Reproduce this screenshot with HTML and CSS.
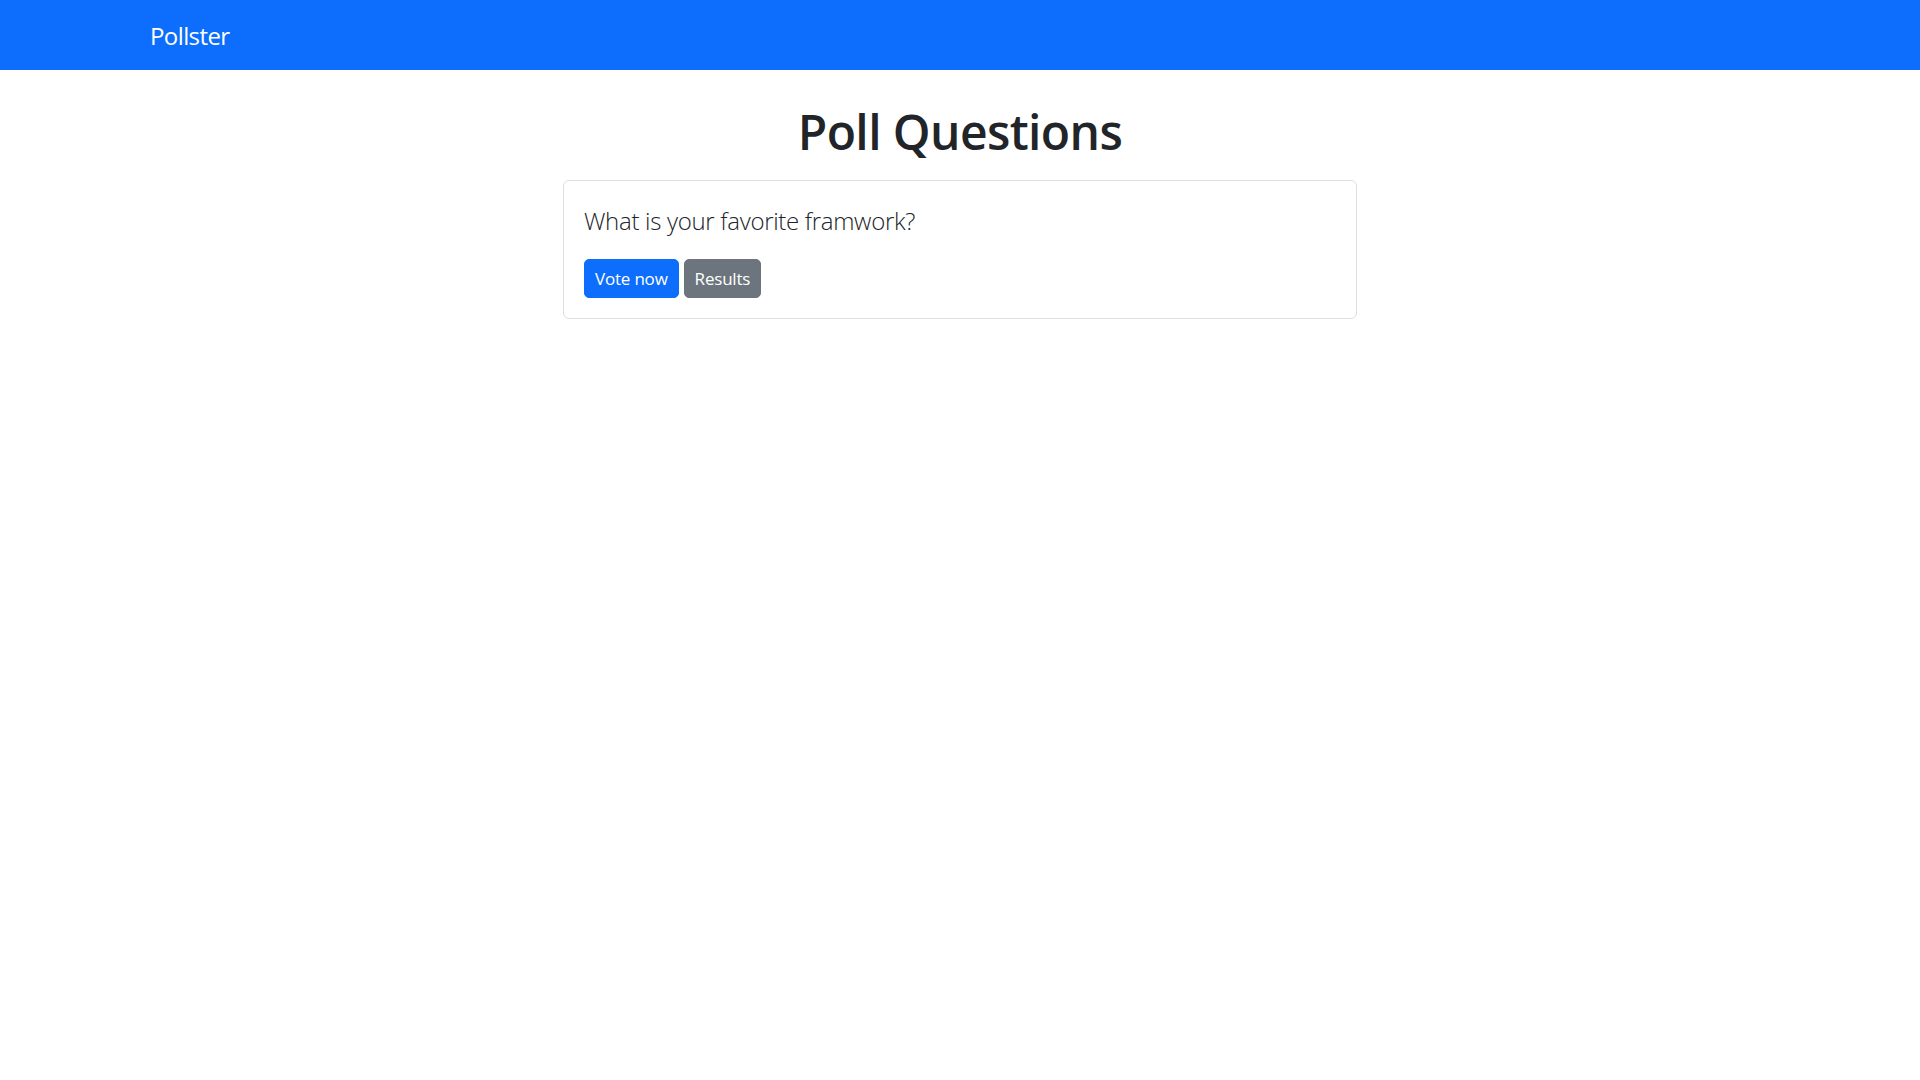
FILE: index.html
```html
<!DOCTYPE html>
<html lang="en">
<head>
<meta charset="utf-8">
<title>Pollster</title>
<link rel="stylesheet" href="styles.css">
</head>
<body>
<nav class="navbar">
  <div class="container">
    <a class="brand" href="#">Pollster</a>
  </div>
</nav>
<main class="container">
  <h1 class="title">Poll Questions</h1>
  <div class="card">
    <div class="card-body">
      <p class="lead">What is your favorite framwork?</p>
      <div class="actions">
        <a class="btn btn-primary" href="#">Vote now</a>
        <a class="btn btn-secondary" href="#">Results</a>
      </div>
    </div>
  </div>
</main>
</body>
</html>
```
FILE: styles.css
```css
* { box-sizing: border-box; }
html, body { margin: 0; padding: 0; }
body {
  font-family: "Open Sans", "Noto Sans", sans-serif;
  color: #212529;
  background: #fff;
}
.container {
  max-width: 1650px;
  margin: 0 auto;
  padding: 0 15px;
}
.navbar {
  height: 70px;
  background: #0d6efd;
  display: flex;
  align-items: center;
}
.navbar .container { width: 100%; }
.brand {
  color: #fff;
  text-decoration: none;
  font-size: 24px;
  letter-spacing: -0.6px;
  line-height: 37.5px;
  display: inline-block;
  padding-top: 2px;
}
.title {
  margin: 32px 0 18px;
  text-align: center;
  font-size: 48px;
  font-weight: 600;
  letter-spacing: -0.6px;
  line-height: 60px;
  color: #212529;
}
.card {
  width: 794px;
  margin: 0 auto;
  border: 1px solid #dfdfdf;
  border-radius: 6px;
}
.card-body { padding: 20px; }
.lead {
  margin: 0 0 20px;
  padding-top: 1px;
  height: 37.5px;
  font-size: 24px;
  font-weight: 300;
  letter-spacing: -0.3px;
  line-height: 37.5px;
  color: #212529;
}
.actions {
  display: flex;
  gap: 5px;
}
.btn {
  display: inline-flex;
  align-items: center;
  height: 39px;
  padding: 0 10px;
  border: 1px solid transparent;
  border-radius: 5px;
  color: #fff;
  text-decoration: none;
  font-size: 17px;
  letter-spacing: -0.2px;
}
.btn-primary { background: #0d6efd; border-color: #0d6efd; }
.btn-secondary { background: #6c757d; border-color: #6c757d; }
```
